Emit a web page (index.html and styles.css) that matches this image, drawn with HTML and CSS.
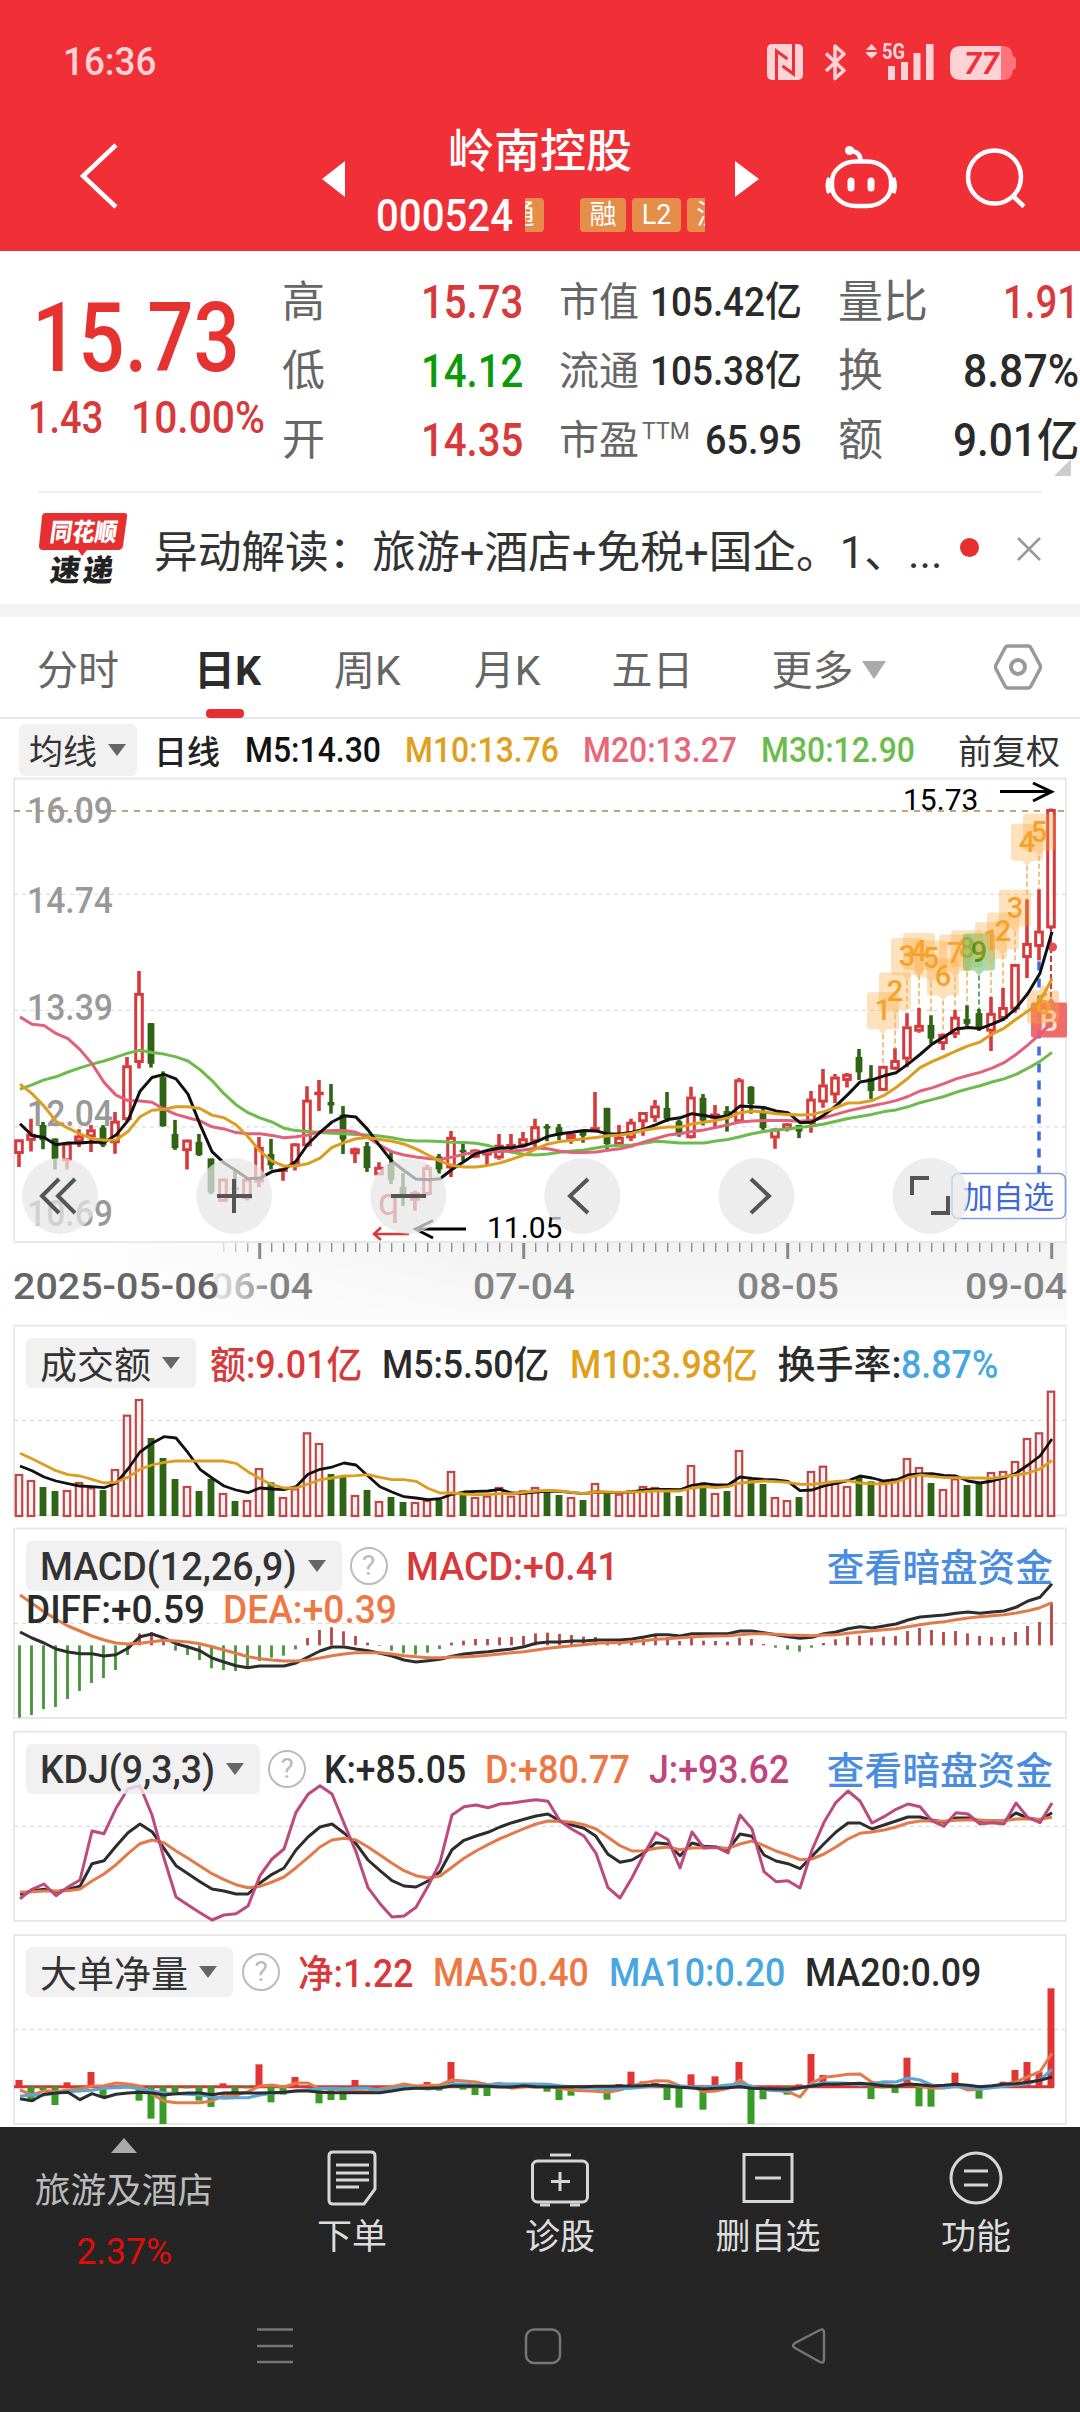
FILE: index.html
```html
<!DOCTYPE html>
<html lang="zh-CN">
<head>
    <meta charset="UTF-8">
    <meta name="viewport" content="width=device-width, initial-scale=1.0">
    <title>岭南控股 000524</title>
    <link rel="stylesheet" href="styles.css">
</head>
<body>
    <header class="top">
        <div class="status">
            <span class="clock fit" data-w="93">16:36</span>
            <svg class="status-icons" viewBox="760 40 260 44" width="260" height="44">
                <rect x="767" y="44" width="36" height="36" rx="5" fill="#ffd3d5"/>
                <path d="M776.500 80V51l11 8M793.500 44v30l-11-8" fill="none" stroke="#f12f36" stroke-width="3"/>
                <path d="M826 53.500l18 17-9 8V46l9 8-18 17" fill="none" stroke="#ffd3d5" stroke-width="3.500" stroke-linejoin="round"/>
                <path d="M866 50l5.500-6 5.500 6zM866 52h11v1.500h-11zM866 53.500l5.500 5 5.500-5z" fill="#ffd3d5"/>
                <text x="882" y="59" class="net5g" textLength="23" lengthAdjust="spacingAndGlyphs">5G</text>
                <path d="M888 66h7v14h-7zM901 62h7v18h-7zM913.500 53h7v27h-7zM926 44h7.500v36h-7.500z" fill="#ffd3d5"/>
                <path d="M1001 46h2q9 0 10 10l3 2v10l-3 2q-1 10-10 10h-2z" fill="#ff7479"/>
                <path d="M961 46h40v34h-40q-11 0-11-11V57q0-11 11-11z" fill="#ffd3d5"/>
                <text x="964" y="74" class="battery" textLength="35" lengthAdjust="spacingAndGlyphs">77</text>
            </svg>
        </div>
        <div class="titlebar">
            <svg class="back" viewBox="0 0 44 70" width="44" height="70"><path d="M38 4L5 35l33 31" fill="none" stroke="#fff" stroke-width="4.500"/></svg>
            <svg class="arrow" viewBox="0 0 24 36" width="24" height="36"><path d="M0 18L23 0v36z" fill="#fff"/></svg>
            <div class="stock">
                <h1>岭南控股</h1>
                <div class="code">
                    <span class="code-num fit" data-w="137">000524</span>
                    <div class="tags"><i>通</i><i>融</i><i>L2</i><i>沪</i></div>
                </div>
            </div>
            <svg class="arrow" viewBox="0 0 24 36" width="24" height="36"><path d="M0 0l24 18L0 36z" fill="#fff"/></svg>
            <svg class="tools" viewBox="820 140 214 74" width="214" height="74" fill="none" stroke="#fff" stroke-width="4.500">
                <path d="M860.500 161q0-9-9-10"/><circle cx="849.500" cy="150.500" r="4.500" fill="#fff" stroke="none"/>
                <rect x="832" y="161.500" width="59" height="44.500" rx="24" ry="20"/>
                <path d="M829.500 178q-3 8 0 15M893 178q3 8 0 15" stroke-width="5"/>
                <path d="M851 181v7M871 181v7" stroke-width="7" stroke-linecap="round"/>
                <circle cx="994.500" cy="177" r="26.500"/><path d="M1013 196l11 10.500"/>
            </svg>
        </div>
    </header>

    <section class="quote">
        <div class="price">
            <div class="last"><span class="fit" data-w="208">15.73</span></div>
            <div class="change"><span class="fit" data-w="75">1.43</span><span class="fit" data-w="134">10.00%</span></div>
        </div>
        <dl class="col col-a">
            <div><dt>高</dt><dd class="up"><span class="fit" data-w="102">15.73</span></dd></div>
            <div><dt>低</dt><dd class="down"><span class="fit" data-w="102">14.12</span></dd></div>
            <div><dt>开</dt><dd class="up"><span class="fit" data-w="102">14.35</span></dd></div>
        </dl>
        <dl class="col col-b">
            <div><dt>市值</dt><dd><span class="fit" data-w="152">105.42亿</span></dd></div>
            <div><dt>流通</dt><dd><span class="fit" data-w="152">105.38亿</span></dd></div>
            <div><dt>市盈<sup>TTM</sup></dt><dd><span class="fit" data-w="97">65.95</span></dd></div>
        </dl>
        <dl class="col col-c">
            <div><dt>量比</dt><dd class="up"><span class="fit" data-w="76">1.91</span></dd></div>
            <div><dt>换</dt><dd><span class="fit" data-w="116">8.87%</span></dd></div>
            <div><dt>额</dt><dd><span class="fit" data-w="126">9.01亿</span></dd></div>
        </dl>
        <span class="corner"></span>
    </section>

    <section class="news">
        <div class="news-logo">
            <svg viewBox="38 508 92 78" width="92" height="78">
                <path d="M46 511h78q4 0 3 4l-4 29q-1 4-5 4H87l-5 6-4-6H43q-4 0-4-4l3-29q0-4 4-4z" fill="#e62f30"/>
                <text transform="translate(49 539) skewX(-8)" class="logo-a" textLength="67" lengthAdjust="spacingAndGlyphs">同花顺</text>
                <text transform="translate(49 579) skewX(-8)" class="logo-b" textLength="63">速递</text>
            </svg>
        </div>
        <span class="news-text fit" data-w="788">异动解读：旅游+酒店+免税+国企。1、...</span>
        <span class="dot"></span>
        <svg class="close" viewBox="0 0 26 26" width="26" height="26"><path d="M2 2l22 22M24 2L2 24" stroke="#999" stroke-width="2.500"/></svg>
    </section>

    <nav class="tabs">
        <span>分时</span>
        <span class="active">日K</span>
        <span>周K</span>
        <span>月K</span>
        <span>五日</span>
        <span>更多<b class="tri tri-light"></b></span>
        <svg viewBox="0 0 50 48" width="50" height="48" fill="none" stroke="#999"><path d="M15 3h20q2 0 3 2l9 17q1 2 0 4l-9 17q-1 2-3 2H15q-2 0-3-2L3 26q-1-2 0-4l9-17q1-2 3-2z" stroke-width="3.500"/><circle cx="25" cy="24" r="7" stroke-width="4"/></svg>
    </nav>

    <div class="ma-row">
        <span class="chip">均线<b class="tri"></b></span>
        <span class="period">日线</span>
        <span class="fit" data-w="136">M5:14.30</span>
        <span class="fit gold" data-w="154">M10:13.76</span>
        <span class="fit pink" data-w="154">M20:13.27</span>
        <span class="fit green" data-w="154">M30:12.90</span>
        <span class="adjust">前复权</span>
    </div>

    <svg id="kline" viewBox="0 776 1080 544" width="1080" height="544">
        <defs>
            <linearGradient id="strip" x1="0" x2="1"><stop offset="0" stop-color="#fff"/><stop offset=".45" stop-color="#f2f2f2"/><stop offset="1" stop-color="#f2f2f2"/></linearGradient>
            <linearGradient id="stripFade" x1="0" x2="0" y1="0" y2="1"><stop offset="0" stop-color="#fff" stop-opacity="0"/><stop offset="1" stop-color="#fff" stop-opacity=".6"/></linearGradient>
            <linearGradient id="dateFade" gradientUnits="userSpaceOnUse" x1="212" x2="275" y1="0" y2="0"><stop offset="0" stop-color="#eee"/><stop offset="1" stop-color="#848484"/></linearGradient>
        </defs>
    </svg>

    <section class="panel" id="volume">
        <div class="head">
            <span class="chip">成交额<b class="tri"></b></span>
            <span class="fit up" data-w="152">额:9.01亿</span>
            <span class="fit" data-w="167">M5:5.50亿</span>
            <span class="fit gold" data-w="188">M10:3.98亿</span>
            <span class="pair"><span class="fit" data-w="124">换手率:</span><span class="fit sky" data-w="97">8.87%</span></span>
        </div>
    </section>

    <section class="panel" id="macd">
        <div class="head">
            <span class="chip"><span class="fit" data-w="257">MACD(12,26,9)</span><b class="tri"></b></span>
            <span class="help">?</span>
            <span class="fit up" data-w="213">MACD:+0.41</span>
            <span class="link">查看暗盘资金</span>
        </div>
        <div class="head-more"><span class="fit" data-w="179">DIFF:+0.59</span><span class="fit orange" data-w="174">DEA:+0.39</span></div>
    </section>

    <section class="panel" id="kdj">
        <div class="head">
            <span class="chip"><span class="fit" data-w="175">KDJ(9,3,3)</span><b class="tri"></b></span>
            <span class="help">?</span>
            <span class="fit" data-w="142">K:+85.05</span>
            <span class="fit orange" data-w="145">D:+80.77</span>
            <span class="fit purple" data-w="140">J:+93.62</span>
            <span class="link">查看暗盘资金</span>
        </div>
    </section>

    <section class="panel" id="netflow">
        <div class="head">
            <span class="chip">大单净量<b class="tri"></b></span>
            <span class="help">?</span>
            <span class="fit up" data-w="115">净:1.22</span>
            <span class="fit orange" data-w="156">MA5:0.40</span>
            <span class="fit sky" data-w="176">MA10:0.20</span>
            <span class="fit" data-w="176">MA20:0.09</span>
        </div>
    </section>

    <footer class="bottom">
        <div class="actions">
            <div class="sector"><b class="tri-up"></b><span>旅游及酒店</span><em class="fit" data-w="96">2.37%</em></div>
            <div class="action">
                <svg viewBox="0 0 60 60" width="60" height="60"><path d="M11 5h38q4 0 4 4v33L42 57H11q-4 0-4-4V9q0-4 4-4z"/><path d="M14 18h33M14 26h33M14 33h33M14 40h23"/></svg>
                <span>下单</span>
            </div>
            <div class="action">
                <svg viewBox="0 0 60 60" width="60" height="60"><rect x="2.500" y="14" width="55" height="41" rx="5"/><path d="M20 8h21M30 25v19M21 34.500h19M10 58h10M40 58h10"/></svg>
                <span>诊股</span>
            </div>
            <div class="action">
                <svg viewBox="0 0 60 60" width="60" height="60"><rect x="6" y="7.500" width="48" height="47"/><path d="M17 31h26"/></svg>
                <span>删自选</span>
            </div>
            <div class="action">
                <svg viewBox="0 0 60 60" width="60" height="60"><circle cx="30" cy="31" r="25"/><path d="M18 24h24M18 38h24"/></svg>
                <span>功能</span>
            </div>
        </div>
        <svg class="sysnav" viewBox="0 2320 1080 54" width="1080" height="54" fill="none" stroke="#767676" stroke-width="2.500">
            <path d="M257 2329.500h36M257 2346h36M257 2362h36"/>
            <rect x="526" y="2329.500" width="34" height="33.500" rx="8"/>
            <path d="M820 2330q4-2 4 3v26q0 5-4 3l-25-14q-4-2 0-5z"/>
        </svg>
    </footer>

    <script src="charts.js"></script>
</body>
</html>
```

FILE: styles.css
```css
* {
    box-sizing: border-box;
}

body {
    margin: 0;
    width: 1080px;
    height: 2412px;
    overflow: hidden;
    background: #fff;
    color: #2a2a2a;
    font-family: Roboto, "Noto Sans CJK SC", sans-serif;
    display: flex;
    flex-direction: column;
}

svg {
    display: block;
    flex: none;
}

.fit {
    display: inline-block;
    white-space: nowrap;
    transform-origin: left center;
    flex: none;
}

.up { color: #d8393a; }
.down { color: #0a9a0a; }
.gold { color: #e0a01c; }
.pink { color: #e8667a; }
.green { color: #6cbc4c; }
.sky { color: #48a7e0; }
.orange { color: #ee7845; }
.purple { color: #c0457c; }

/* header */
.top {
    height: 251px;
    background: #f12f36;
    color: #fff;
}

.status {
    height: 122px;
    padding: 0 60px 0 63px;
    display: flex;
    align-items: center;
    justify-content: space-between;
}

.clock {
    margin-top: 2px;
    font-size: 38px;
    font-weight: 500;
    color: #ffd3d5;
}

.status-icons {
    margin-top: 2px;
}

.net5g {
    font-size: 22px;
    font-weight: 700;
    fill: #ffd3d5;
}

.battery {
    font-size: 31px;
    font-weight: 700;
    font-style: italic;
    fill: #f12f36;
}

.titlebar {
    height: 129px;
    display: grid;
    grid-template-columns: 322px 24px 389px 85px 214px;
    align-items: start;
}

.back {
    margin: 19px 0 0 78px;
}

.arrow {
    margin-top: 39px;
}

.tools {
    margin-top: 18px;
}

.stock {
    padding-left: 30px;
}

.stock h1 {
    margin: 0 31px 20px 0;
    height: 56px;
    line-height: 59px;
    text-align: center;
    font-size: 46px;
    font-weight: 500;
}

.code {
    display: flex;
    gap: 12px;
    height: 34px;
    align-items: center;
}

.code-num {
    margin-top: 2px;
    font-size: 44px;
    font-weight: 500;
}

.tags {
    width: 180px;
    height: 34px;
    overflow: hidden;
    display: flex;
    gap: 6px;
}

.tags i {
    flex: none;
    width: 46px;
    border-radius: 4px;
    background: #e58e4a;
    font-style: normal;
    font-size: 27px;
    line-height: 34px;
    text-align: center;
}

.tags i:first-child {
    margin: 0 30px 0 -27px;
}

.tags i:nth-child(3) {
    width: 49px;
}

/* quote */
.quote {
    position: relative;
    height: 240px;
    padding-top: 17px;
    display: flex;
}

.price {
    width: 282px;
    color: #d8393a;
}

.last {
    height: 114px;
    padding-left: 32px;
    margin-top: 13px;
    line-height: 114px;
    font-size: 96px;
    font-weight: 500;
    color: #e63230;
}

.change {
    display: flex;
    gap: 28px;
    padding-left: 28px;
    line-height: 46px;
    font-size: 45px;
    font-weight: 500;
}

.col {
    margin: 0;
}

.col > div {
    height: 69px;
    display: flex;
    justify-content: space-between;
    align-items: center;
    line-height: 69px;
}

.col dt {
    color: #666;
    font-size: 43px;
    white-space: nowrap;
}

.col dd {
    margin: 0;
    font-size: 46px;
    font-weight: 500;
}

.col-a { width: 241px; }
.col-b { width: 243px; margin-left: 36px; }
.col-c { width: 241px; margin-left: 36px; }
.col-b dt { font-size: 40px; }
.col-b dd { font-size: 41px; }
.col-c dt { font-size: 45px; }

.col sup {
    font-size: 23px;
    line-height: 0;
    vertical-align: 15px;
    margin-left: 3px;
}

.corner {
    position: absolute;
    right: 9px;
    bottom: 15px;
    border-left: 17px solid transparent;
    border-bottom: 17px solid #ccc;
}

/* news */
.news {
    height: 113px;
    margin: 0 38px;
    border-top: 2px solid #eee;
    display: flex;
    align-items: center;
}

.news-logo {
    width: 116px;
}

.logo-a {
    font-size: 25px;
    font-weight: 900;
    fill: #fff;
}

.logo-b {
    font-size: 30px;
    font-weight: 900;
    fill: #222;
}

.news-text {
    font-size: 44px;
    color: #333;
}

.dot {
    width: 19px;
    height: 19px;
    margin: 0 auto 2px 18px;
    border-radius: 50%;
    background: #e62f30;
}

/* tabs */
.tabs {
    height: 115px;
    border-top: 13px solid #f4f4f4;
    border-bottom: 2px solid #e8e8e8;
    padding-left: 37px;
    display: flex;
    align-items: center;
    font-size: 41px;
    color: #666;
}

.tabs span {
    position: relative;
    white-space: nowrap;
}

.tabs span + span { margin-left: 73px; }
.tabs span:nth-child(2) { margin-left: 75px; }
.tabs span:nth-child(5) { margin-left: 71px; }
.tabs span:nth-child(6) { margin-left: 78px; }

.tabs .active {
    color: #2c2c2c;
    font-weight: 700;
}

.tabs .active::after {
    content: "";
    position: absolute;
    left: 12px;
    bottom: -21px;
    width: 38px;
    height: 9px;
    border-radius: 4px;
    background: #e62f30;
}

.tabs svg {
    margin-left: auto;
    margin-right: 37px;
}

.tri {
    display: inline-block;
    border: 9px solid transparent;
    border-top: 12px solid #666;
    border-bottom: 0;
    margin-left: 11px;
    vertical-align: middle;
}

.tri-light {
    border-width: 12px;
    border-top: 18px solid #aaa;
    border-bottom: 0;
    margin: -8px 0 0 8px;
}

.chip {
    display: flex;
    align-items: center;
    background: rgba(238, 238, 238, .8);
    border-radius: 6px;
    color: #333;
    white-space: nowrap;
}

.ma-row {
    height: 57px;
    padding: 4px 0 0 19px;
    display: flex;
    align-items: center;
    font-size: 35px;
    font-weight: 500;
    white-space: nowrap;
    color: #111;
}

.ma-row .chip {
    width: 118px;
    height: 52px;
    padding-left: 10px;
    font-size: 34px;
    font-weight: 400;
}

.ma-row .period {
    margin: 0 25px 0 17px;
    font-size: 33px;
    color: #222;
}

.ma-row .fit {
    padding-top: 2px;
}

.ma-row .gold,
.ma-row .pink,
.ma-row .green {
    position: relative;
    left: 24px;
}

.ma-row .pink { left: 48px; }
.ma-row .green { left: 72px; }

.ma-row .adjust {
    margin-left: auto;
    margin-right: 20px;
    font-size: 34px;
    font-weight: 400;
    color: #333;
}

/* charts: the drawing and its heading share one grid cell */
.panel {
    display: grid;
    grid-template: 1fr / 1fr;
    flex: none;
}

.panel > * {
    grid-area: 1 / 1;
}

#volume { height: 204px; }
#macd { height: 203px; }
#kdj { height: 203px; }
#netflow { height: 197px; }

.head {
    z-index: 1;
    align-self: start;
    height: 50px;
    margin: 17px 27px 0 26px;
    display: flex;
    align-items: center;
    gap: 21px;
    font-size: 38px;
    font-weight: 500;
}

.head > .fit {
    padding-top: 2px;
}

#volume .head { margin-top: 18px; gap: 20px; }
#volume .head > .fit { padding: 0 0 4px; }
#volume .chip { margin-right: -6px; }
#kdj .head { gap: 19px; }
#netflow .head { gap: 20px; }
#netflow .head > .up { padding: 0 0 4px; }

.head .chip {
    height: 50px;
    padding: 0 16px 0 14px;
    font-size: 37px;
    font-weight: 400;
}

.chip .fit {
    padding-top: 2px;
    font-size: 38px;
    font-weight: 500;
}

.pair {
    display: flex;
    flex: none;
    align-items: baseline;
    padding-bottom: 4px;
}

.help {
    width: 38px;
    height: 38px;
    margin: 0 -3px 0 -13px;
    border: 2.5px solid #bbb;
    border-radius: 50%;
    color: #bbb;
    font-size: 28px;
    line-height: 34px;
    text-align: center;
    font-weight: 400;
}

#kdj .help { margin: 0 -1px 0 -11px; }
#netflow .help { margin: 0 -2px 0 -11px; }

.link {
    margin: 0 0 3px auto;
    color: #4a8de0;
    font-size: 37.7px;
    font-weight: 500;
}

.head-more {
    align-self: start;
    margin: 64px 0 0 26px;
    display: flex;
    gap: 18px;
    font-size: 38px;
    font-weight: 500;
}

.axis { font-size: 36px; font-weight: 500; fill: #999; }
.date { font-size: 36px; font-weight: 500; fill: #848484; }
.tip { font-size: 30px; fill: #000; }
.mark { font-size: 29px; font-weight: 500; text-anchor: middle; }

/* bottom bar */
.bottom {
    flex: 1;
    background: #252525;
}

.actions {
    height: 193px;
    display: flex;
}

.sector {
    width: 248px;
    padding-top: 11px;
    display: flex;
    flex-direction: column;
    align-items: center;
    font-size: 35.7px;
    line-height: 52px;
    color: #bbb;
}

.sector span {
    margin-top: 12px;
}

.sector em {
    margin-top: 9px;
    font-style: normal;
    font-size: 36px;
    color: #e00d0d;
}

.tri-up {
    border: 13px solid transparent;
    border-top: 0;
    border-bottom: 15px solid #aaa;
}

.action {
    width: 208px;
    padding-top: 20px;
    display: flex;
    flex-direction: column;
    align-items: center;
    font-size: 35px;
    line-height: 52px;
    color: #ddd;
}

.action svg {
    fill: none;
    stroke: #d6d6d6;
    stroke-width: 3;
}

.action span {
    margin-top: 5px;
}
```

FILE: charts.js
```js
const NS = 'http://www.w3.org/2000/svg';
const STEP = 12;      // distance between two trading days
const FIRST = 19;     // centre of the first bar
const RED = '#d8393a';
const GREEN = '#2f6414';

function add(parent, name, attrs, text) {
    const el = document.createElementNS(NS, name);
    for (const key in attrs) el.setAttribute(key, attrs[key]);
    if (text !== undefined) el.textContent = text;
    parent.appendChild(el);
    return el;
}

function nums(s) {
    return s.trim().split(/[\s,]+/).map(Number);
}

function line(svg, data, color, y, width) {
    const pts = nums(data).map((v, i) => (FIRST + 1 + i * STEP) + ',' + y(v).toFixed(1)).join(' ');
    add(svg, 'polyline', { points: pts, fill: 'none', stroke: color, 'stroke-width': width || 3, 'stroke-linejoin': 'round' });
}

function stroke(svg, d, color, width, dash) {
    const attrs = { d: d, fill: 'none', stroke: color, 'stroke-width': width };
    if (dash) attrs['stroke-dasharray'] = dash;
    return add(svg, 'path', attrs);
}

document.querySelectorAll('.fit').forEach(el => {
    const natural = el.offsetWidth;
    const w = Number(el.dataset.w);
    el.style.transform = 'scaleX(' + w / natural + ')';
    // a centred column keeps its text in the middle, a row closes the gap
    if (el.tagName === 'EM') el.style.transformOrigin = 'center';
    else el.style.marginRight = (w - natural) + 'px';
});

/* ---------- candles ---------- */
const k = document.getElementById('kline');
const ky = v => 770 + v / 2.9037;
const kx = v => 540 + v / 2.9037;

add(k, 'rect', { x: 50, y: 1243, width: 1017, height: 77, fill: 'url(#strip)' });
add(k, 'rect', { x: 50, y: 1243, width: 1017, height: 77, fill: 'url(#stripFade)' });
add(k, 'rect', { x: 14, y: 778.5, width: 1052, height: 463.5, fill: 'none', stroke: '#e8e8e8', 'stroke-width': 2 });
[361, 698, 1036].forEach(v => stroke(k, 'M14 ' + ky(v) + 'H1066', '#ddd', 1.3, '4 4'));
stroke(k, 'M14 ' + ky(119) + 'H1064', '#bda678', 2, '6 6');
[['16.09', 153], ['14.74', 414], ['13.39', 725], ['12.04', 1034], ['10.69', 1324]].forEach(([t, v]) =>
    add(k, 'text', { x: 27, y: ky(v), class: 'axis', textLength: 86, lengthAdjust: 'spacingAndGlyphs' }, t));

// colour, high, body top, body bottom, low
const candles = `r 1073 1073 1114 1153|r 1013 1057 1076 1108|g 1022 1031 1075 1101|g 1070 1070 1130 1160|r 1083 1083 1135 1160
|r 1043 1062 1080 1095|r 1031 1044 1066 1109|g 1031 1038 1090 1095|r 993 1019 1083 1114|r 833 858 1016 1020
|r 584 648 850 867|g 735 735 853 864|g 875 892 1034 1036|g 1016 1057 1098 1103|r 1073 1074 1106 1160
|g 1057 1080 1118 1121|g 1128 1128 1227 1231|r 1187 1187 1253 1253|g 1165 1212 1219 1245|r 1187 1187 1245 1250
|r 1066 1095 1197 1211|g 1071 1115 1148 1160|r 1155 1158 1165 1193|r 1083 1085 1150 1163|r 918 958 1092 1095
|r 900 935 941 990|g 912 964 974 998|g 976 1001 1073 1115|r 1096 1099 1115 1141|g 1080 1092 1156 1167
|r 1139 1153 1176 1176|g 1105 1144 1190 1202|g 1170 1211 1235 1266|r 1222 1226 1250 1280|r 1147 1154 1233 1236
|g 1115 1122 1160 1172|r 1048 1066 1156 1182|g 1085 1103 1110 1135|r 1101 1103 1125 1127|r 1108 1110 1117 1147
|r 1057 1089 1127 1132|r 1057 1087 1092 1110|r 1051 1070 1092 1097|r 1013 1035 1080 1095|g 1028 1034 1041 1078
|g 1028 1037 1062 1075|r 1055 1057 1073 1085|g 1045 1050 1062 1082|r 935 1038 1050 1052|g 981 981 1086 1100
|r 1031 1066 1088 1090|r 1013 1022 1069 1077|r 993 994 1022 1062|r 958 975 1010 1022|g 935 981 1013 1022
|g 1015 1020 1060 1065|r 920 949 1068 1070|g 941 952 1018 1032|r 973 998 1012 1040|g 976 990 1008 1050
|r 894 899 1022 1025|g 918 920 970 998|g 978 990 1040 1045|r 1040 1042 1069 1100|r 1025 1027 1045 1050
|g 1031 1031 1050 1069|r 932 955 1027 1053|r 868 914 965 981|r 883 891 944 967|r 880 883 902 922
|g 810 833 878 900|g 857 895 932 955|r 859 860 931 932|r 808 843 869 871|r 706 745 840 863
|r 691 741 759 763|g 712 740 780 795|r 765 767 795 813|r 697 717 768 778|g 683 723 737 745
|g 694 706 752 758|r 659 706 759 816|r 633 689 722 728|r 563 564 695 705|r 375 503 545 604
|r 346 467 513 553|r 112 114 459 462`;

candles.split('|').forEach((row, i) => {
    const [c, ...v] = row.trim().split(' ');
    const [hi, top, bot, lo] = v.map(n => ky(Number(n)));
    const x = FIRST + i * STEP;
    if (c === 'g') {
        stroke(k, `M${x} ${hi}V${lo}`, GREEN, 3.6);
        add(k, 'rect', { x: x - 3.4, y: top, width: 6.8, height: bot - top, fill: GREEN });
    } else {
        stroke(k, `M${x} ${hi}V${top}M${x} ${bot}V${lo}`, RED, 3.6);
        add(k, 'rect', { x: x - 3.3, y: top + 1.2, width: 6.6, height: Math.max(bot - top - 2.4, .5), fill: '#fff', stroke: RED, 'stroke-width': 3 });
    }
});

// day-count flags above the candles: day, number, box top, line end
const flags = [[72, 1, 645, 859], [73, 2, 588, 808], [74, 3, 488, 706], [75, 4, 473, 691], [76, 5, 495, 712], [77, 6, 547, 765],
    [78, 7, 478, 697], [79, 8, 465, 683], [80, 9, 475, 694], [81, 1, 441, 659], [82, 2, 414, 633], [83, 3, 347, 563],
    [84, 4, 156, 375], [85, 5, 127, 346]];
flags.forEach(([i, n, top, end]) => {
    const x = FIRST + i * STEP, y = ky(top), g = n === 9;
    stroke(k, `M${x} ${y + 42}V${ky(end)}`, g ? '#4aa85a' : '#eebd78', 1.8, '5 3');
    add(k, 'path', {
        d: `M${x - 13} ${y}h26q3 0 3 3v31q0 3-3 3h-8l-5 5-5-5h-8q-3 0-3-3v-31q0-3 3-3z`,
        fill: g ? '#4fb85a' : '#fba63a', 'fill-opacity': g ? .5 : .33
    });
    add(k, 'text', { x: x, y: y + 28, class: 'mark', fill: g ? '#3c9614' : '#f7a128' }, n);
});

stroke(k, `M${kx(1449)} ${ky(556)}V${ky(1170)}`, '#3f6bdc', 3.5, '9 8');
stroke(k, `M1051 ${ky(462)}V${ky(660)}`, '#c8393a', 2, '6 3');
add(k, 'circle', { cx: kx(1488), cy: ky(514), r: 4.6, fill: '#e85050' });
add(k, 'path', { d: `M1033 ${ky(675)}h14l4-5 4 5h10q2 0 2 2v31q0 2-2 2h-32q-2 0-2-2v-31q0-2 2-2z`, fill: '#ee5f5f', 'fill-opacity': .92 });
add(k, 'text', { x: 1049, y: 1031, class: 'mark', fill: '#ffe4d8' }, 'B');
add(k, 'path', { d: `M1030 ${ky(640)}h9l4-6 4 6h9q3 0 3 3v27q0 3-3 3h-26q-3 0-3-3v-27q0-3 3-3z`, fill: '#fba63a', 'fill-opacity': .4 });
add(k, 'text', { x: 1043, y: ky(708), class: 'mark', fill: '#f7a128' }, '6');

line(k, `927 914 900 891 877 865 854 845 834 822 814 820 825 833 845 870 902 940 972 995 1010 1022 1040 1047 1050 1053 1055 1056 1058 1060
 1063 1068 1074 1077 1077 1079 1081 1082 1084 1090 1102 1110 1116 1118 1115 1110 1106 1103 1098 1092 1090 1089 1084 1078 1080 1083 1083 1083 1077 1073
 1065 1056 1050 1045 1042 1038 1034 1028 1020 1012 1006 1000 992 987 978 966 957 948 936 926 917 906 897 884 866 846 820`, '#6cbc4c', ky);
line(k, `717 738 742 765 780 812 853 907 944 960 961 965 985 1000 1010 1019 1036 1042 1053 1056 1056 1061 1068 1065 1060 1050 1047 1047 1052 1067
 1090 1109 1118 1124 1128 1131 1124 1116 1110 1109 1108 1106 1103 1098 1100 1107 1111 1111 1109 1104 1100 1092 1080 1070 1060 1056 1050 1045 1038 1030
 1022 1019 1018 1018 1018 1020 1017 1010 1000 990 982 975 968 960 948 932 923 911 897 887 878 866 850 826 798 767 733`, '#e2607a', ky);
line(k, `1027 1061 1067 1088 1083 1083 1080 1082 1060 1018 933 893 884 897 941 1029 1108 1141 1163 1187 1185 1166 1160 1136 1086 1052 1022 1004 1008 1045
 1092 1136 1163 1188 1190 1187 1160 1137 1114 1104 1098 1097 1091 1080 1064 1056 1052 1047 1048 1057 1057 1052 1043 1030 1015 1010 998 1003 1009 1004
 976 978 980 990 995 1024 1022 1002 975 942 906 900 888 879 854 826 796 775 752 748 751 738 723 692 648 590 470`, '#111', ky);
line(k, `912 940 976 1020 1040 1057 1070 1075 1074 1050 1007 988 985 978 978 983 1002 1010 1030 1065 1107 1136 1150 1150 1143 1127 1096 1082 1071 1067
 1073 1078 1086 1100 1118 1136 1148 1153 1153 1148 1141 1130 1118 1100 1086 1079 1075 1071 1067 1062 1060 1055 1046 1040 1037 1037 1028 1023 1018 1010
 995 990 993 998 1000 1002 1000 992 980 967 966 960 945 922 895 864 847 832 816 801 790 767 750 724 700 672 606`, '#dc9d20', ky);

// high and low call-outs
add(k, 'text', { x: 903, y: 810, class: 'tip' }, '15.73');
stroke(k, 'M1000 791.500H1051M1033 783l18.500 8.700-18.500 9.300', '#000', 3);
add(k, 'text', { x: 487, y: 1238, class: 'tip' }, '11.05');
stroke(k, 'M466 1229H416M433 1220.500l-17.500 8.500 17.500 9', '#000', 2.8);
add(k, 'text', { x: 378, y: 1215, 'font-size': 38, fill: '#d8393a' }, 'q');
stroke(k, 'M409 1234H375M381 1227.500l-7 6.500 7 6', '#d8393a', 2.5);
add(k, 'rect', { x: 952, y: 1173.5, width: 113.5, height: 45, rx: 6, fill: '#fff', stroke: '#7f9bd8', 'stroke-width': 1.6 });
add(k, 'text', { x: 962.5, y: 1207.5, 'font-size': 30.500, fill: '#4169d8' }, '加自选');

// round buttons on top of the chart
const buttons = ['M59-17L42 0l17 17M75-17L58 0l17 17', 'M217 0h35M234-17v34', 'M391 0h35', 'M588-17L570 0l18 17', 'M751-17L769 0l-18 17',
    'M929-18h-17v17M931 17h17V0'];
buttons.forEach((d, n) => {
    add(k, 'circle', { cx: 60 + n * 174.1, cy: 1196, r: 38, fill: '#e6e6e6', 'fill-opacity': .72 });
    stroke(k, d, '#555', 4).setAttribute('transform', 'translate(0 1196)');
});

// time axis
for (let i = 17; i < 87; i++) {
    const major = (i - 20) % 22 === 0;
    stroke(k, `M${FIRST + .7 + i * STEP} 1243v${major ? 16 : 9}`, '#888', major ? 3 : 1.3)
        .setAttribute('opacity', i < 20 ? .3 + (i - 17) * .2 : 1);
}
[['06-04', 211, 'url(#dateFade)'], ['07-04', 473], ['08-05', 737], ['09-04', 965]].forEach(([t, x, fill]) => {
    const el = add(k, 'text', { x: x, y: 1298.5, class: 'date', textLength: 102, lengthAdjust: 'spacingAndGlyphs' }, t);
    if (fill) el.style.fill = fill;
});
add(k, 'text', { x: 13, y: 1298.5, class: 'date', textLength: 206, lengthAdjust: 'spacingAndGlyphs', style: 'fill:#666' }, '2025-05-06');

/* ---------- indicator panels ---------- */
function panel(id, top, height, frameTop, frameBottom, mid) {
    const svg = document.createElementNS(NS, 'svg');
    svg.setAttribute('viewBox', `0 ${top} 1080 ${height}`);
    svg.setAttribute('width', 1080);
    svg.setAttribute('height', height);
    document.getElementById(id).prepend(svg);
    add(svg, 'rect', { x: 14, y: frameTop, width: 1052, height: frameBottom - frameTop, fill: 'none', stroke: '#e8e8e8', 'stroke-width': 2 });
    stroke(svg, `M14 ${mid}H1066`, '#ddd', 1.2, '4 4');
    return svg;
}
const py = base => v => base + v / 3;

// turnover
const vy = py(1320);
const vol = panel('volume', 1320, 204, 1325.7, 1515.5, vy(301));
`r465 r483 g501 g513 r513 r489 r505 g510 r450 r287 r240 g354 g414 g477 r501 g513 g477 r522 g543 r543 r447 g487 r534 r508 r340 r372 g462 g470 r528 g510
r546 g531 g546 r549 r543 g540 r456 g517 r534 r530 r504 r530 r514 r504 g515 g525 r534 g540 r492 g518 r524 r514 r501 r504 g515 g528 r438 g488 r522 g513
r393 g478 g492 r534 r543 g531 r456 r440 r492 r501 g470 g484 r487 r478 r417 r444 g489 r510 r478 g495 g488 r459 r456 r426 r357 r340 r215`
    .split(/\s+/).forEach((s, i) => {
        const x = FIRST + i * STEP, y = vy(Number(s.slice(1)));
        if (s[0] === 'g') add(vol, 'rect', { x: x - 3.4, y: y, width: 6.8, height: 1516 - y, fill: GREEN });
        else add(vol, 'rect', { x: x - 3.2, y: y, width: 6.4, height: 1516 - y, fill: '#fdf0f0', stroke: '#c04747', 'stroke-width': 2.2 });
    });
line(vol, `438 452 471 483 491 498 500 503 490 447 396 370 350 354 398 448 474 498 510 518 504 507 509 500 463 448 441 429 435 468
 500 516 530 534 539 536 523 516 514 513 508 519 520 516 513 514 518 521 516 517 518 516 510 508 508 509 496 491 495 495
 471 475 478 480 484 512 510 498 490 482 468 474 483 480 465 462 461 466 468 483 489 483 474 460 435 408 357`, '#111', vy, 2.8);
line(vol, `400 416 434 452 464 468 478 489 487 472 448 435 427 423 423 423 423 423 430 455 476 494 504 504 492 479 474 468 467 464
 472 479 479 484 505 519 519 522 524 524 521 521 517 513 511 513 517 521 516 516 517 516 515 513 513 513 504 500 503 500
 489 486 483 485 487 493 493 489 484 482 489 491 492 486 473 465 469 473 473 474 474 475 470 465 459 447 421`, '#dc9d20', vy, 2.8);

// MACD
const macd = panel('macd', 1524, 203, 1528.7, 1718, vy(910));
nums(`1193 1185 1167 1161 1137 1113 1089 1074 1050 1005 940 936 960 992 1005 1020 1045 1050 1053 1040 1023 1013 1007 988 954 930 922 934 948 968
 978 992 1000 1004 998 987 968 962 957 957 952 951 948 940 938 942 945 950 951 960 965 960 956 948 951 963 954 962 963 965
 953 957 972 983 989 995 983 969 958 950 947 953 950 948 933 924 930 936 933 940 948 951 951 936 918 906 847`).forEach((v, i) =>
    stroke(macd, `M${FIRST + .5 + i * STEP} ${vy(976)}V${vy(v)}`, v > 976 ? '#439638' : '#b94444', 2.8));
line(macd, `936 954 969 987 996 1001 1001 1008 1004 985 950 942 954 971 981 992 1014 1026 1037 1043 1038 1038 1038 1029 1011 993 981 981 987 992
 1000 1008 1020 1026 1022 1018 1009 1002 998 995 991 987 980 970 966 966 963 963 960 960 960 957 951 944 944 948 941 941 941 941
 933 933 938 944 950 955 952 941 936 926 920 924 918 912 900 891 888 885 880 876 880 876 873 862 843 832 791`, '#2d2d2d', vy);
line(macd, `825 850 875 898 918 933 948 960 969 972 970 965 961 963 966 971 980 990 1000 1010 1016 1020 1023 1023 1020 1014 1007 1002 998 998
 998 1002 1007 1010 1013 1013 1011 1011 1009 1006 1002 998 995 990 985 981 977 974 970 968 968 965 962 958 956 953 951 949 948 947
 944 941 941 943 945 946 947 945 944 940 936 932 929 926 920 914 909 905 899 894 890 887 884 879 872 863 848`, '#e27a4a', vy);

// KDJ
const jy = py(1725);
const kdj = panel('kdj', 1727, 203, 1731.7, 1921, jy(304));
line(kdj, `508 498 493 501 493 484 416 407 364 323 297 320 370 422 446 470 492 498 507 507 474 448 429 375 336 306 297 324 356 405
 437 467 483 486 468 440 374 346 333 322 306 293 283 273 267 288 300 310 334 388 412 405 384 353 357 392 354 364 366 374
 327 334 390 408 416 431 394 356 321 294 294 312 300 288 276 276 285 292 279 279 288 288 288 264 279 286 263`, '#2d2d2d', jy);
line(kdj, `501 500 498 498 497 492 468 447 419 386 356 345 353 378 400 423 446 464 479 488 484 471 456 428 398 366 345 340 345 366
 390 415 437 452 459 453 427 400 378 359 341 326 311 297 288 289 292 299 312 337 362 378 377 370 366 374 369 368 368 370
 357 348 362 378 390 404 402 387 366 342 325 321 315 306 294 288 287 289 286 284 285 288 287 282 281 283 277`, '#e27a4a', jy);
line(kdj, `521 493 477 512 486 465 318 326 250 191 182 270 400 516 540 563 585 570 566 543 452 402 372 262 208 182 207 295 380 488
 536 576 573 547 484 412 270 245 240 248 237 234 229 224 229 288 313 333 385 488 519 458 388 323 344 429 321 369 366 384
 270 312 440 470 467 489 375 292 232 198 228 294 275 253 237 245 288 304 263 267 297 293 297 234 278 293 234`, '#bd4a7c', jy);

// net volume of large orders
const net = panel('netflow', 1930, 197, 1935, 2124, jy(913));
stroke(net, `M14 ${jy(1085)}H1054`, '#cf3b3b', 3);
nums(`1065 1130 1095 1140 1072 1092 1041 1113 1088 1088 1127 1181 1197 1103 1090 1127 1146 1075 1117 1090 1018 1132 1109 1056 1082 1135 1125 1125 1065 1088
 1085 1085 1085 1085 1071 1097 1011 1094 1110 1113 1084 1092 1085 1090 1100 1125 1112 1085 1085 1124 1077 1040 1069 1074 1125 1148 1048 1154 1054 1085
 1011 1197 1123 1085 1109 1078 987 1050 1075 1085 1072 1122 1090 1104 998 1144 1145 1085 1043 1085 1121 1085 1070 1035 1011 1040 790`).forEach((v, i) => {
    const y = jy(v), zero = jy(1085);
    add(net, 'rect', { x: FIRST - 3.5 + i * STEP, y: Math.min(y, zero), width: 7, height: Math.abs(y - zero), fill: v > 1085 ? '#389c26' : '#e23434' });
});
line(net, `1095 1110 1097 1100 1095 1092 1083 1082 1074 1077 1083 1108 1128 1133 1133 1133 1128 1112 1110 1100 1083 1080 1086 1074 1074 1092 1092 1095 1098 1100
 1092 1085 1077 1083 1081 1080 1065 1068 1071 1079 1075 1090 1085 1079 1082 1090 1096 1097 1099 1102 1095 1083 1073 1067 1068 1083 1085 1100 1098 1090
 1064 1089 1092 1096 1100 1116 1072 1057 1053 1048 1047 1072 1078 1083 1075 1084 1090 1089 1082 1095 1093 1086 1078 1071 1055 1040 985`, '#e27a4a', jy);
line(net, `1113 1110 1110 1104 1100 1098 1096 1090 1088 1086 1092 1098 1103 1106 1108 1110 1116 1120 1118 1118 1110 1105 1102 1098 1094 1091 1090 1092 1090 1090
 1096 1092 1086 1088 1092 1088 1076 1077 1080 1080 1076 1077 1077 1077 1078 1082 1085 1088 1090 1092 1091 1090 1086 1083 1080 1083 1086 1088 1084 1080
 1076 1084 1094 1097 1097 1090 1080 1073 1073 1075 1080 1076 1070 1071 1059 1065 1080 1088 1084 1087 1092 1088 1084 1080 1076 1064 1033`, '#5ba6d6', jy);
line(net, `1121 1127 1108 1104 1102 1124 1106 1118 1108 1104 1102 1104 1110 1106 1104 1104 1109 1104 1103 1104 1104 1103 1102 1098 1098 1102 1103 1103 1103 1103
 1103 1098 1092 1090 1090 1088 1083 1083 1083 1084 1086 1086 1082 1085 1086 1086 1085 1085 1084 1084 1083 1083 1082 1080 1083 1087 1089 1092 1090 1088
 1085 1090 1091 1092 1093 1088 1083 1078 1078 1076 1075 1078 1082 1084 1077 1079 1083 1081 1078 1081 1085 1082 1078 1076 1072 1066 1056`, '#2d2d2d', jy);
```
